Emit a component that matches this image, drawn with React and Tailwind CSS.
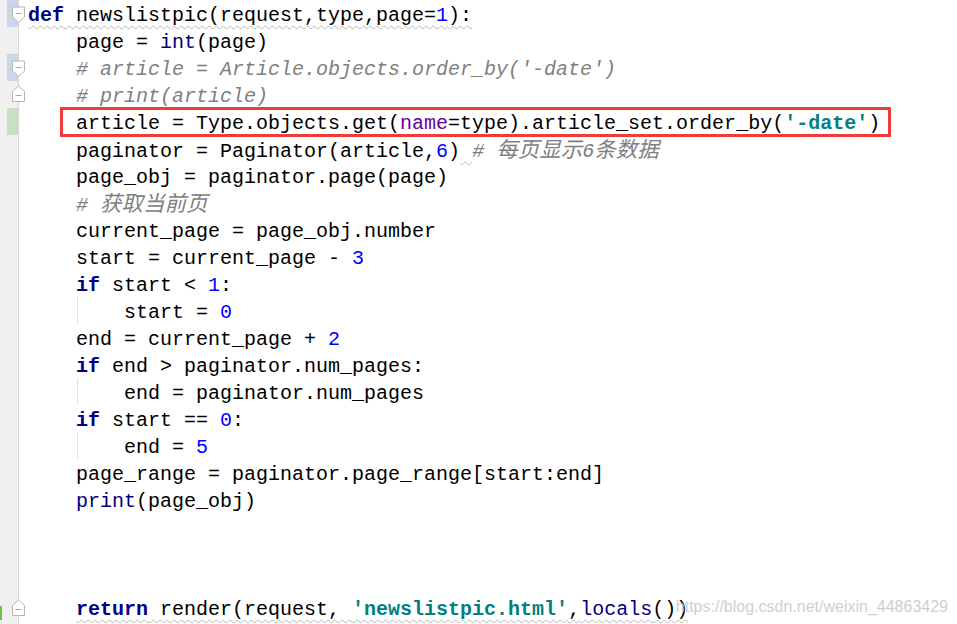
import React from "react";

const K = ({ children }) => <span className="font-bold text-[#000080]">{children}</span>;
const B = ({ children }) => <span className="text-[#000080]">{children}</span>;
const N = ({ children }) => <span className="text-[#0000ff]">{children}</span>;
const S = ({ children }) => <span className="font-bold text-[#008080]">{children}</span>;
const P = ({ children }) => <span className="text-[#660099]">{children}</span>;
const C = ({ children }) => <span className="italic text-[#808080]">{children}</span>;
const Cjk = ({ children }) => (
  <span className="italic text-[#808080] text-[21.5px] leading-none font-['Noto_Sans_CJK_SC',sans-serif]">{children}</span>
);
const Wavy = ({ children }) => (
  <span className="underline decoration-wavy decoration-[#b8b8b8] decoration-1 underline-offset-[4px]">{children}</span>
);

function FoldMark({ up, top }) {
  return (
    <svg
      width="15"
      height="18"
      viewBox="0 0 15 18"
      className="absolute left-[11px]"
      style={{ top }}
    >
      {up ? (
        <path d="M1.5 6.5 L7.5 1 L13.5 6.5 V16.5 H1.5 Z" fill="#ffffff" stroke="#b5b5b5" />
      ) : (
        <path d="M1.5 1 H13.5 V11 L7.5 16.5 L1.5 11 Z" fill="#ffffff" stroke="#b5b5b5" />
      )}
      <path d={up ? "M4.5 10.5 H10.5" : "M4.5 7.5 H10.5"} stroke="#a8a8a8" />
    </svg>
  );
}

const lines = [
  {
    bar: "blue",
    fold: "down",
    foldTop: 6,
    code: (
      <Wavy>
        <K>def</K> newslistpic(request,type,page=<N>1</N>):
      </Wavy>
    ),
  },
  { code: <>    page = <B>int</B>(page)</> },
  { bar: "blue", fold: "down", foldTop: 6, code: <>    <C># article = Article.objects.order_by('-date')</C></> },
  { fold: "up", foldTop: 4, code: <>    <C># print(article)</C></> },
  {
    bar: "green",
    box: true,
    code: (
      <>
        {"    article = Type.objects.get("}
        <P>name</P>=type).article_set.order_by(<S>'-date'</S>)
      </>
    ),
  },
  {
    code: (
      <>
        {"    paginator = Paginator(article,"}
        <N>6</N>)<Wavy> </Wavy>
        <C>#</C>
        <C> </C>
        <Cjk>每页显示</Cjk>
        <C>6</C>
        <Cjk>条数据</Cjk>
      </>
    ),
  },
  { code: <>    page_obj = paginator.page(page)</> },
  {
    code: (
      <>
        {"    "}
        <C># </C>
        <Cjk>获取当前页</Cjk>
      </>
    ),
  },
  { code: <>    current_page = page_obj.number</> },
  { code: <>    start = current_page - <N>3</N></> },
  { code: <>    <K>if</K> start &lt; <N>1</N>:</> },
  { guide: true, code: <>        start = <N>0</N></> },
  { code: <>    end = current_page + <N>2</N></> },
  { code: <>    <K>if</K> end &gt; paginator.num_pages:</> },
  { guide: true, code: <>        end = paginator.num_pages</> },
  { code: <>    <K>if</K> start == <N>0</N>:</> },
  { guide: true, code: <>        end = <N>5</N></> },
  { code: <>    page_range = paginator.page_range[start:end]</> },
  { code: <>    <B>print</B>(page_obj)</> },
  { code: null },
  { code: null },
  { code: null },
  {
    fold: "up",
    foldTop: 5,
    edge: true,
    code: (
      <>
        {"    "}
        <Wavy>
          <K>return</K> render(request, <S>'newslistpic.html'</S>,<B>locals</B>())
        </Wavy>
      </>
    ),
  },
  { code: null },
];

export default function App() {
  return (
    <div className="relative w-[957px] h-[624px] overflow-hidden bg-white font-['Liberation_Mono',monospace] text-[20px] leading-[27px] text-black">
      {lines.map((ln, i) => (
        <div key={i} className="relative flex h-[27px] shrink-0">
          <div className="relative w-[19px] shrink-0 bg-[#f0f0f0] border-r border-[#d7d7d7]">
            {ln.bar === "blue" && <div className="absolute left-[7px] top-0 h-full w-[11px] bg-[#c7d8ea]" />}
            {ln.bar === "green" && <div className="absolute left-[7px] top-0 h-full w-[11px] bg-[#c9dfc3]" />}
            {ln.edge && <div className="absolute left-0 top-[12px] h-[14px] w-[2px] bg-[#6cc04a]" />}
          </div>
          {ln.fold && <FoldMark up={ln.fold === "up"} top={ln.foldTop} />}
          <div className="relative flex-1 whitespace-pre pl-[9px] pt-[2px]">
            {ln.guide && <div className="absolute left-[58px] top-0 h-full w-px bg-[#e2e2e2]" />}
            {ln.code}
          </div>
          {ln.box && (
            <div className="absolute left-[60px] top-[-1px] h-[30px] w-[831px] border-[3px] border-[#ee3b3b]" />
          )}
        </div>
      ))}
      <div className="absolute right-[9px] bottom-[8px] font-['Liberation_Sans',sans-serif] text-[16px] leading-[18px] text-[#cfcfcf]">
        https://blog.csdn.net/weixin_44863429
      </div>
    </div>
  );
}
